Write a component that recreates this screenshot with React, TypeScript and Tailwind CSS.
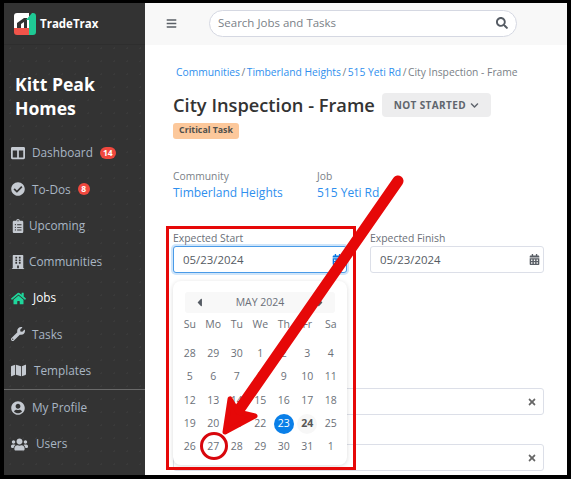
import { FaBars, FaBuilding, FaCalendarAlt, FaCaretLeft, FaCaretRight, FaCheckCircle, FaChevronDown, FaClipboardList, FaColumns, FaHome, FaMap, FaSearch, FaTimes, FaUserCircle, FaUsers, FaWrench } from "react-icons/fa";

const nav = [
  { label: "Dashboard", icon: FaColumns, badge: "14", gap: "gap-[7px]", size: "size-[14px]" },
  { label: "To-Dos", icon: FaCheckCircle, badge: "8", gap: "gap-[7px]", size: "size-[14px]" },
  { label: "Upcoming", icon: FaClipboardList, gap: "gap-[4px]", size: "size-[14px]" },
  { label: "Communities", icon: FaBuilding, gap: "gap-[4px]", size: "size-[14px]" },
  { label: "Jobs", icon: FaHome, active: true, gap: "gap-[7px]", size: "size-[15px]" },
  { label: "Tasks", icon: FaWrench, gap: "gap-[7px]", size: "size-[14px]" },
  { label: "Templates", icon: FaMap, gap: "gap-[8px]", size: "size-[15px]" },
];

const lowerNav = [
  { label: "My Profile", icon: FaUserCircle, gap: "gap-[7px]", size: "size-[14px]" },
  { label: "Users", icon: FaUsers, gap: "gap-[8px]", size: "size-[17px]" },
];

const weeks = [
  ["28", "29", "30", "1", "2", "3", "4"],
  ["5", "6", "7", "8", "9", "10", "11"],
  ["12", "13", "14", "15", "16", "17", "18"],
  ["19", "20", "21", "22", "23", "24", "25"],
  ["26", "27", "28", "29", "30", "31", "1"],
];

function NavRow({ item }: { item: any }) {
  const Icon = item.icon;
  return (
    <div className={`h-[36.25px] pl-[7px] flex items-center text-[11.8px] ${item.gap} ${item.active ? "text-white" : "text-[#a9b6c4]"}`}>
      <Icon className={`shrink-0 ${item.size} ${item.active ? "text-[#1fd69b]" : "text-[#c5cad1]"}`} />
      <span>{item.label}</span>
      {item.badge && (
        <span className="h-[12px] min-w-[12px] px-[3px] rounded-full bg-[#f0483e] text-white text-[8.5px] font-bold flex items-center justify-center">
          {item.badge}
        </span>
      )}
    </div>
  );
}

function Logo() {
  return (
    <svg width="22" height="22" viewBox="0 0 22 22" className="shrink-0">
      <path d="M0 15V3a3 3 0 0 1 3-3h12v15z" fill="#fff" />
      <path d="M3 15V10l7-5h3v10z" fill="#333" />
      <path d="M7 15v-4l3-2v6z" fill="#fff" />
      <path d="M0 15h15v7H3a3 3 0 0 1-3-3z" fill="#f0544a" />
      <path d="M15 22V7l-3 0 6-7h1a3 3 0 0 1 3 3v16a3 3 0 0 1-3 3z" fill="#1fc995" />
    </svg>
  );
}

function DateField({ label, focused }: { label: string; focused?: boolean }) {
  return (
    <div className="w-[174px]">
      <div className="text-[10.4px] leading-[14px] text-[#6b7078] mb-[1px]">{label}</div>
      <div className={`h-[27px] bg-white rounded-[3px] border pl-[9px] pr-[3px] flex items-center justify-between text-[11.4px] text-[#555b63] ${focused ? "border-[#4a9be8] ring-2 ring-[#cfe5fa]" : "border-[#dcdfe8]"}`}>
        <span>05/23/2024</span>
        <FaCalendarAlt className={`size-[11px] ${focused ? "text-[#0a78e2]" : "text-[#5a5f66]"}`} />
      </div>
    </div>
  );
}

function ClearField() {
  return (
    <div className="h-[27px] bg-white rounded-[3px] border border-[#dcdfe8] pr-[6px] flex items-center justify-end">
      <FaTimes className="size-[10px] text-[#666]" />
    </div>
  );
}

function Calendar() {
  return (
    <div className="absolute left-[28px] top-[278px] w-[174px] h-[184px] bg-white rounded-[8px] shadow-[0_1px_5px_rgba(0,0,0,0.14)] px-[12px] pt-[11px] text-[#6b7078]">
      <div className="h-[21px] bg-[#f8f8f8] rounded-[3px] flex items-center justify-between px-[8px] text-[10.5px]">
        <FaCaretLeft className="size-[13px] text-[#555b63]" />
        <span>MAY 2024</span>
        <FaCaretRight className="size-[13px] text-[#555b63]" />
      </div>
      <div className="grid grid-cols-7 mx-[-7px] w-[164.5px] text-[10.5px] text-center">
        {["Su", "Mo", "Tu", "We", "Th", "Fr", "Sa"].map((d) => (
          <div key={d} className="h-[24px] flex items-center justify-center">{d}</div>
        ))}
      </div>
      <div className="mt-[5px] mx-[-7px] w-[164.5px] grid grid-cols-7 auto-rows-[23.4px] text-[10.5px]">
        {weeks.flat().map((d, i) => (
          <div key={i} className="flex items-center justify-center">
            {i === 25 ? (
              <span className="size-[20px] rounded-full bg-[#0a7fe8] text-white flex items-center justify-center">{d}</span>
            ) : i === 26 ? (
              <span className="size-[20px] rounded-full bg-[#f7f7f7] font-bold text-[#555] flex items-center justify-center">{d}</span>
            ) : (
              d
            )}
          </div>
        ))}
      </div>
    </div>
  );
}

export default function App() {
  return (
    <div className="relative w-[571px] h-[479px] bg-black pt-[3px] pl-[4px] pr-[4px] pb-[4px] flex overflow-hidden font-['Open_Sans',sans-serif]">
      <aside className="w-[141px] shrink-0 bg-[#333333] bg-[radial-gradient(#3a3a3a_1px,transparent_1px)] bg-[length:13px_13px] overflow-hidden">
        <div className="h-[42px] pl-[10px] pt-[10px] flex gap-[4px] border-b border-[#2e2e2e] bg-[#333333]">
          <Logo />
          <span className="text-white font-bold text-[11.5px] leading-[22px]">TradeTrax</span>
        </div>
        <div className="pl-[11px] pt-[27px] pb-[15px] text-white font-bold text-[17.6px] leading-[24px]">
          Kitt Peak
          <br />
          Homes
        </div>
        {nav.map((item) => (
          <NavRow key={item.label} item={item} />
        ))}
        <div className="border-t border-[#6a6a6a]" />
        {lowerNav.map((item) => (
          <NavRow key={item.label} item={item} />
        ))}
        <div className="pl-[10px] pt-[14px]">
          <FaUserCircle className="size-[12px] text-[#c5cad1]" />
        </div>
      </aside>
      <main className="relative flex-1 bg-white overflow-hidden">
        <div className="h-[42px] pb-[2px] bg-[#f8f8f8] flex items-center">
          <FaBars className="ml-[21px] size-[11px] text-[#5a5f66]" />
          <div className="ml-[32px] w-[308px] h-[27px] bg-white rounded-full border border-[#d5d8e2] pl-[8px] pr-[8px] flex items-center justify-between text-[11.5px] text-[#7a7f87]">
            <span>Search Jobs and Tasks</span>
            <FaSearch className="size-[12px] text-[#555b63]" />
          </div>
        </div>
        <div className="pl-[28px] pr-[23px]">
          <div className="pl-[3px] pt-[20px] flex gap-[1.5px] text-[10.3px] leading-[14px] text-[#7a7f87] whitespace-nowrap">
            <span className="text-[#2f8fee]">Communities</span>
            <span>/</span>
            <span className="text-[#2f8fee]">Timberland Heights</span>
            <span>/</span>
            <span className="text-[#2f8fee]">515 Yeti Rd</span>
            <span>/</span>
            <span>City Inspection - Frame</span>
          </div>
          <div className="mt-[14px] flex items-center gap-[7px]">
            <h1 className="text-[18.25px] leading-[24px] font-semibold text-[#333] whitespace-nowrap">City Inspection - Frame</h1>
            <div className="w-[109px] h-[24px] bg-[#ededee] rounded-[4px] flex items-center justify-center gap-[4px] text-[10px] font-bold tracking-[0.4px] text-[#60656d]">
              NOT STARTED <FaChevronDown className="size-[9px]" />
            </div>
          </div>
          <div className="mt-[6px] w-[66px] h-[16px] rounded-[3px] bg-[#fcc89b] text-[8.8px] font-bold text-[#50504c] flex items-center justify-center">
            Critical Task
          </div>
          <div className="mt-[29px] flex">
            <div className="w-[144px]">
              <div className="text-[10.3px] leading-[16px] text-[#7a7f87]">Community</div>
              <div className="text-[12px] leading-[18px] text-[#2f8fee]">Timberland Heights</div>
            </div>
            <div>
              <div className="text-[10.3px] leading-[16px] text-[#7a7f87]">Job</div>
              <div className="text-[12px] leading-[18px] text-[#2f8fee]">515 Yeti Rd</div>
            </div>
          </div>
          <div className="mt-[29px] flex gap-[23px]">
            <DateField label="Expected Start" focused />
            <DateField label="Expected Finish" />
          </div>
          <div className="mt-[115px] flex flex-col gap-[29px]">
            <ClearField />
            <ClearField />
          </div>
        </div>
        <Calendar />
      </main>
      <div className="absolute left-[166px] top-[226px] w-[190px] h-[244px] border-[3px] border-[#e60808]" />
      <svg className="absolute inset-0 pointer-events-none" width="571" height="479" viewBox="0 0 571 479">
        <path d="M398 181 L232 420" stroke="#e60808" strokeWidth="11" strokeLinecap="round" fill="none" />
        <path d="M230 399 L225 432 L255 416 L238 412 Z" fill="#e60808" stroke="#e60808" strokeWidth="5" strokeLinejoin="round" />
        <circle cx="214" cy="446" r="12.5" fill="none" stroke="#d8060c" strokeWidth="3" />
      </svg>
    </div>
  );
}
